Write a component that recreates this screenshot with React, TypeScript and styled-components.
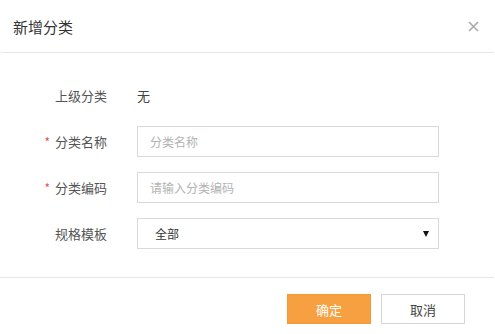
import React from "react";
import styled, { createGlobalStyle } from "styled-components";

const Global = createGlobalStyle`
  html, body { margin: 0; padding: 0; background: #fff; }
  body { font-family: "Noto Sans CJK SC", "Noto Sans", sans-serif; }
  * { box-sizing: border-box; }
`;

const Dialog = styled.div`
  width: 495px;
  height: 334px;
  background: #fff;
  display: flex;
  flex-direction: column;
`;

const Header = styled.div`
  height: 53px;
  margin: 0 1px;
  border-bottom: 1px solid #e6e6e6;
  display: flex;
  align-items: center;
  justify-content: space-between;
  padding: 0 15px 0 12px;
`;

const Title = styled.div`
  font-size: 15px;
  color: #333;
  line-height: 20px;
  margin-top: 1px;
`;

const Close = styled.button`
  border: 0;
  background: none;
  padding: 0;
  width: 12px;
  height: 12px;
  display: flex;
  align-items: center;
  justify-content: center;
  cursor: pointer;
`;

const Body = styled.div`
  flex: 1;
  padding-top: 27px;
  display: flex;
  flex-direction: column;
  gap: 15px;
`;

const Row = styled.div`
  display: grid;
  grid-template-columns: 137px 302px;
  align-items: center;
  height: 31px;
`;

const Label = styled.div`
  font-size: 13px;
  color: #555;
  text-align: right;
  padding-right: 30px;
  line-height: 18px;
`;

const Star = styled.span`
  color: #f04b4b;
  margin-right: 5px;
  font-size: 12px;
`;

const Value = styled.div`
  font-size: 13px;
  color: #444;
`;

const Input = styled.input`
  height: 31px;
  width: 302px;
  border: 1px solid #d9d9d9;
  padding: 0 12px;
  font-family: inherit;
  font-size: 12px;
  color: #333;
  outline: none;
  &::placeholder { color: #b3b3b3; }
`;

const SelectBox = styled.div`
  position: relative;
  height: 31px;
  width: 302px;
  border: 1px solid #d9d9d9;
  display: flex;
  align-items: center;
  padding: 0 17px;
  font-size: 12px;
  color: #333;
`;

const Arrow = styled.span`
  position: absolute;
  right: 9px;
  top: 12px;
  width: 0;
  height: 0;
  border-left: 3px solid transparent;
  border-right: 3px solid transparent;
  border-top: 6px solid #111;
`;

const Footer = styled.div`
  border-top: 1px solid #e6e6e6;
  margin-right: 1px;
  height: 57px;
  display: flex;
  justify-content: flex-end;
  align-items: flex-start;
  padding: 16px 29px 0 0;
  gap: 10px;
`;

const Button = styled.button<{ $primary?: boolean }>`
  width: 84px;
  height: 30px;
  font-family: inherit;
  font-size: 13px;
  cursor: pointer;
  border: 1px solid ${(p) => (p.$primary ? "#f59a33" : "#d6d6d6")};
  background: ${(p) => (p.$primary ? "#f7a041" : "#fff")};
  color: ${(p) => (p.$primary ? "#fff" : "#444")};
`;

export default function App() {
  return (
    <>
      <Global />
      <Dialog>
        <Header>
          <Title>新增分类</Title>
          <Close aria-label="close">
            <svg width="11" height="11" viewBox="0 0 11 11">
              <path d="M1 1L10 10M10 1L1 10" stroke="#aaa" strokeWidth="1.6" />
            </svg>
          </Close>
        </Header>
        <Body>
          <Row>
            <Label>上级分类</Label>
            <Value>无</Value>
          </Row>
          <Row>
            <Label>
              <Star>*</Star>分类名称
            </Label>
            <Input placeholder="分类名称" />
          </Row>
          <Row>
            <Label>
              <Star>*</Star>分类编码
            </Label>
            <Input placeholder="请输入分类编码" />
          </Row>
          <Row>
            <Label>规格模板</Label>
            <SelectBox>
              全部
              <Arrow />
            </SelectBox>
          </Row>
        </Body>
        <Footer>
          <Button $primary>确定</Button>
          <Button>取消</Button>
        </Footer>
      </Dialog>
    </>
  );
}
